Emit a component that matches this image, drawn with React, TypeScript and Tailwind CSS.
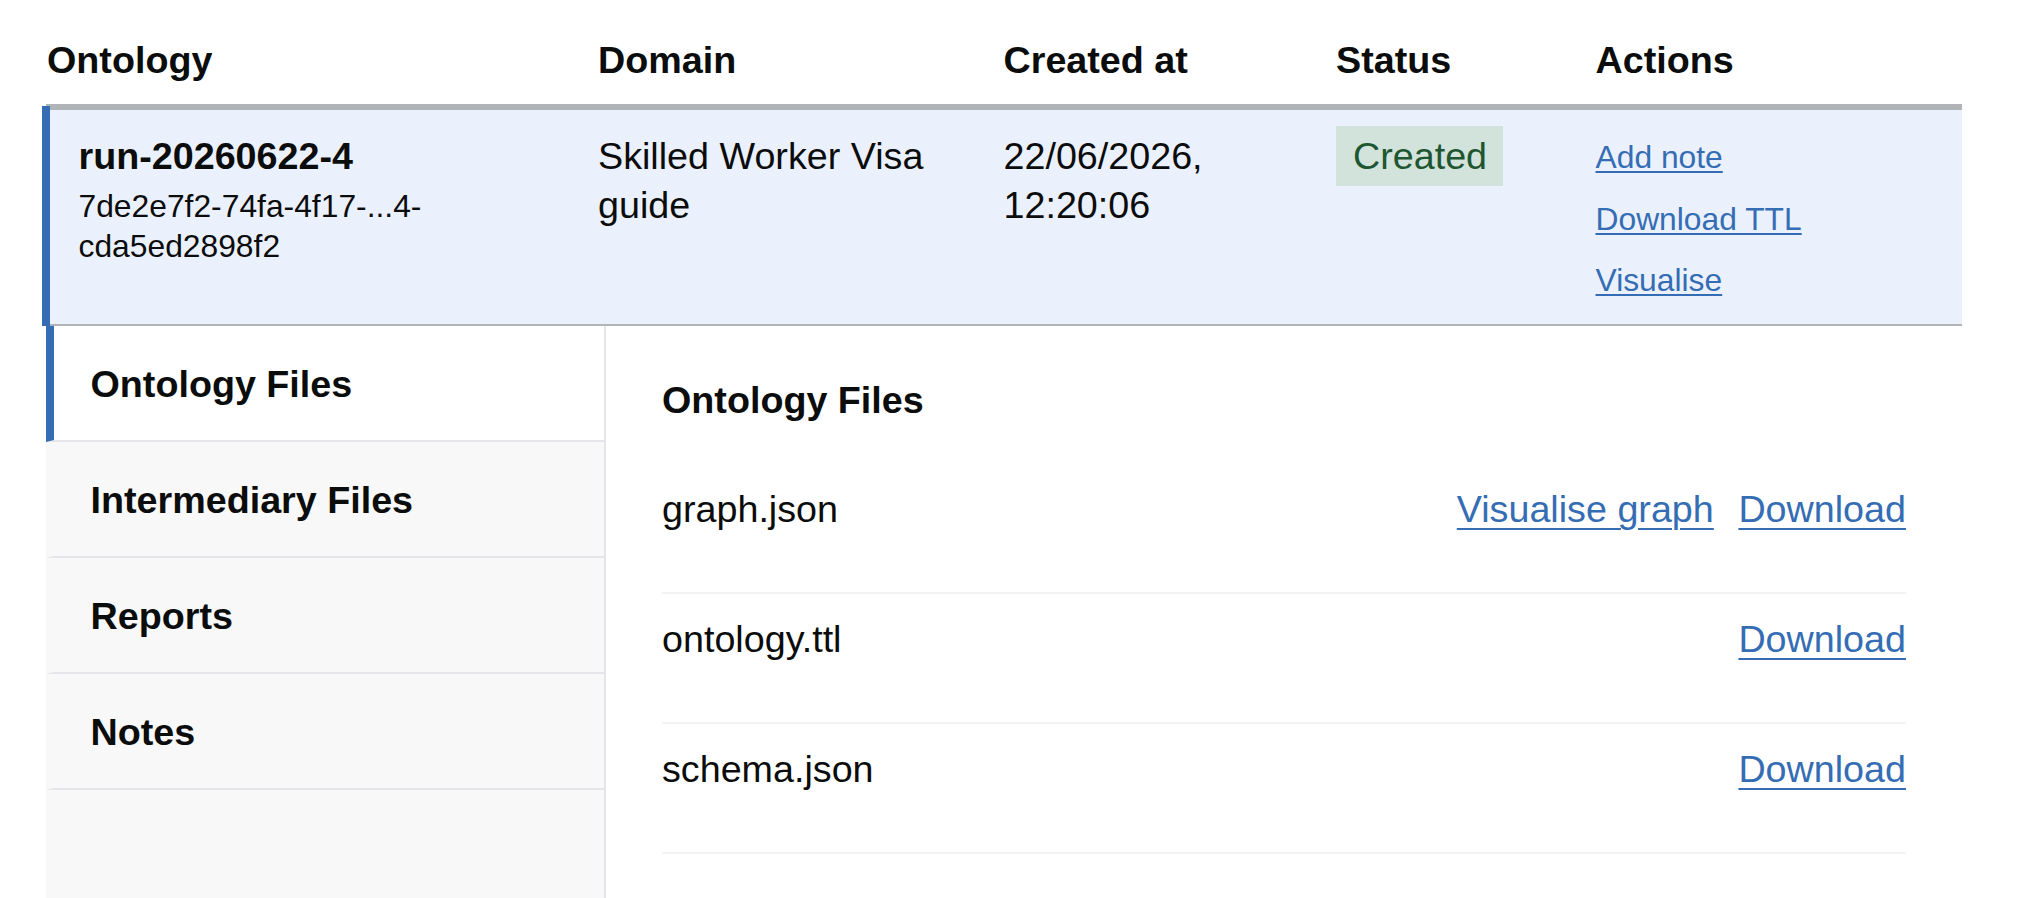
export default function App() {
  const tabs = ["Ontology Files", "Intermediary Files", "Reports", "Notes"];
  const files: { name: string; visualise?: boolean }[] = [
    { name: "graph.json", visualise: true },
    { name: "ontology.ttl" },
    { name: "schema.json" },
  ];
  const bigLink =
    "text-[#356db4] underline decoration-2 underline-offset-[6px]";
  const smallLink =
    "text-[#356db4] underline decoration-2 underline-offset-[3px] text-[31.8px] leading-[39.7px]";

  return (
    <div className="h-[898px] overflow-hidden bg-white font-['Liberation_Sans',Arial,sans-serif] text-[#0b0c0c] text-[37.7px] leading-[49.6px] pl-[46px] pr-[62px]">
      {/* table header */}
      <div className="flex h-[106px] pt-[35.5px] border-b-2 border-[#b1b4b6] font-bold">
        <div className="w-[551px] shrink-0 pl-[1px]">Ontology</div>
        <div className="w-[406.5px] shrink-0 pl-[1px]">Domain</div>
        <div className="w-[332.5px] shrink-0">Created at</div>
        <div className="w-[259.5px] shrink-0">Status</div>
        <div className="flex-1">Actions</div>
      </div>

      {/* selected row */}
      <div className="-ml-[4px] flex">
        <div className="w-[8px] shrink-0 bg-[#356db4]" />
        <div className="flex flex-1 h-[220px] border-t-4 border-b-2 border-[#b1b4b6] bg-[#ebf1fc] pt-[21.5px]">
          <div className="w-[547px] shrink-0 pl-[28.5px]">
            <div className="font-bold">run-20260622-4</div>
            <div className="mt-[6px] text-[31.8px] leading-[39.7px]">
              7de2e7f2-74fa-4f17-...4-
              <br />
              cda5ed2898f2
            </div>
          </div>
          <div className="w-[406.5px] shrink-0 pl-[1px] pr-[40px]">
            Skilled Worker Visa guide
          </div>
          <div className="w-[332.5px] shrink-0 pr-[40px]">
            22/06/2026, 12:20:06
          </div>
          <div className="w-[259.5px] shrink-0">
            <div className="-mt-[5.5px] w-fit bg-[#d2e3dc] text-[#1e5631] pl-[17px] pr-[16px] pt-[5.9px] pb-[4.5px]">
              Created
            </div>
          </div>
          <div className="flex flex-1 flex-col items-start gap-[22px] pt-[6.4px]">
            <a className={smallLink}>Add note</a>
            <a className={smallLink}>Download TTL</a>
            <a className={smallLink}>Visualise</a>
          </div>
        </div>
      </div>

      {/* expanded details */}
      <div className="flex h-[572px]">
        <div className="w-[560px] shrink-0 flex flex-col bg-[#f8f8f8] border-r-2 border-[#e6e6ea]">
          {tabs.map((t, i) => (
            <div
              key={t}
              className={
                i === 0
                  ? "flex h-[116px] items-center border-b-2 border-b-[#e6e6ea] border-l-8 border-l-[#356db4] bg-white pl-[36.5px] pt-[3px] font-bold"
                  : "flex h-[116px] items-center border-b-2 border-b-[#e6e6ea] border-l-8 border-l-transparent pl-[36.5px] pt-[3px] font-bold"
              }
            >
              {t}
            </div>
          ))}
        </div>
        <div className="flex-1 px-[56px] pt-[49.5px]">
          <h2 className="font-bold mb-[38.9px]">Ontology Files</h2>
          {files.map((f) => (
            <div
              key={f.name}
              className="flex h-[130px] items-start justify-between border-b-2 border-[#f3f3f3] pt-[21.5px]"
            >
              <span>{f.name}</span>
              <div className="flex gap-[24.6px]">
                {f.visualise && <a className={bigLink}>Visualise graph</a>}
                <a className={bigLink}>Download</a>
              </div>
            </div>
          ))}
        </div>
      </div>
    </div>
  );
}
